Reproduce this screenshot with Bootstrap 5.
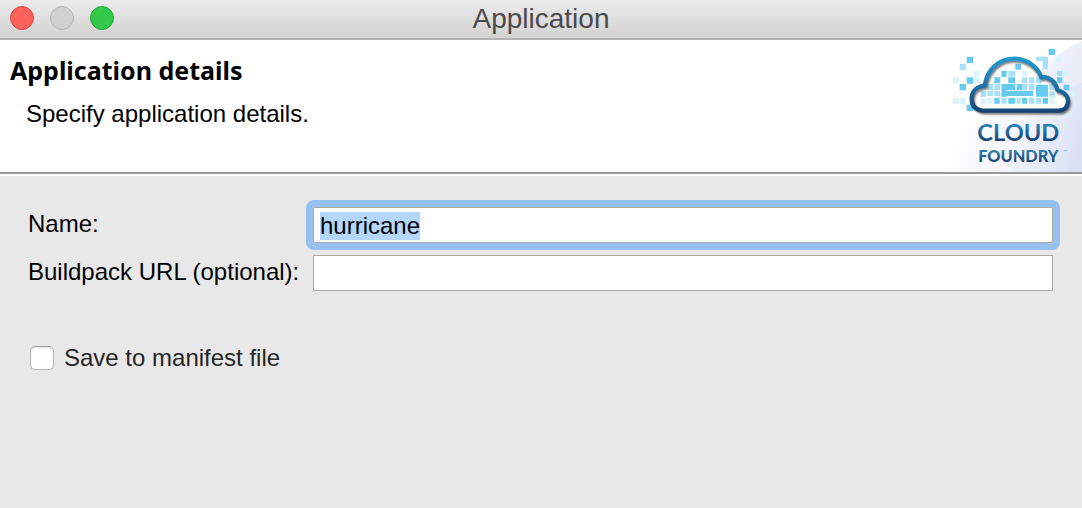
<!DOCTYPE html>
<html lang="en">
<head>
<meta charset="utf-8">
<meta name="viewport" content="width=device-width, initial-scale=1">
<title>Application</title>
<link href="https://cdn.jsdelivr.net/npm/bootstrap@5.3.0/dist/css/bootstrap.min.css" rel="stylesheet">
<style>
  body { background: #e8e8e8; color: #000; font: 24px/28px "Liberation Sans", Arial, sans-serif; }
  .titlebar { height: 40px; background: linear-gradient(#ebebeb, #d2d2d2); border-bottom: 2px solid #b1b1b1; }
  .window-title { font-size: 28px; line-height: 38px; color: #4a4a4a; }
  .lights { left: 10px; top: 6px; gap: 16px; }
  .light { width: 24px; height: 24px; border: 1px solid #b4b4b4; background: #d0d0d0; }
  .light-close { background: #fc605c; border-color: #e0443f; }
  .light-zoom { background: #34c84a; border-color: #1faa32; }
  .banner { background: #fff; border-bottom: 2px solid #999; box-shadow: 0 2px #fff; }
  .banner-text { padding: 16px 10px 0; }
  .banner h1 { font: bold 25px/28px "Noto Sans", sans-serif; margin: 0 0 16px; }
  .banner p { margin: 0 0 0 16px; }
  .details { padding: 33px 29px 0 28px; }
  .fields { display: grid; grid-template-columns: 269px 1fr; column-gap: 16px; row-gap: 12px; align-items: center; }
  .fields label { padding-bottom: 2px; }
  .fields .form-control { height: 36px; padding: 2px 6px 0; border: 1px solid #acacac; border-radius: 0; font: inherit; color: #000; background: #fff; }
  .fields .form-control:focus, .fields .ringed { border-color: #acacac; border-radius: 1px; box-shadow: none; outline: 7px solid #95c0f0; }
  .form-control::selection { background: #b3d7ff; color: #000; }
  .save-row { margin: 53px 0 0 2px; gap: 10px; color: #262626; }
  .save-row .form-check-input { width: 24px; height: 24px; margin: 0; border: 1px solid #b8b8b8; border-top-color: #a0a0a0; border-radius: 5px; background-color: #fff; box-shadow: inset 0 1px 2px #ddd; }
</style>
</head>
<body>
<header class="titlebar position-relative text-center">
  <div class="lights position-absolute d-flex">
    <button type="button" class="light light-close rounded-circle p-0" aria-label="Close"></button>
    <button type="button" class="light rounded-circle p-0" aria-label="Minimize" disabled></button>
    <button type="button" class="light light-zoom rounded-circle p-0" aria-label="Zoom"></button>
  </div>
  <div class="window-title">Application</div>
</header>

<section class="banner d-flex justify-content-between">
  <div class="banner-text">
    <h1>Application details</h1>
    <p>Specify application details.</p>
  </div>
  <svg class="flex-shrink-0" width="150" height="132" viewBox="0 12 450 396" role="img" aria-label="Cloud Foundry">
    <defs>
      <linearGradient id="sky" gradientUnits="userSpaceOnUse" x1="90" y1="200" x2="450" y2="320">
        <stop offset="0" stop-color="#fff"/><stop offset="0.5" stop-color="#f4f6fc"/><stop offset="1" stop-color="#dae1f5"/>
      </linearGradient>
      <linearGradient id="edge" gradientUnits="userSpaceOnUse" x1="0" y1="62" x2="0" y2="230">
        <stop offset="0" stop-color="#2199d0"/><stop offset="0.4" stop-color="#207fb5"/><stop offset="1" stop-color="#17406f"/>
      </linearGradient>
      <linearGradient id="ink1" gradientUnits="userSpaceOnUse" x1="0" y1="268" x2="0" y2="318">
        <stop offset="0" stop-color="#2681b4"/><stop offset="1" stop-color="#173c70"/>
      </linearGradient>
      <linearGradient id="ink2" gradientUnits="userSpaceOnUse" x1="0" y1="340" x2="0" y2="375">
        <stop offset="0" stop-color="#2c87b8"/><stop offset="1" stop-color="#234675"/>
      </linearGradient>
      <filter id="soft" x="-10%" y="-10%" width="120%" height="130%"><feGaussianBlur stdDeviation="3"/></filter>
    </defs>
    <path d="M0 408V330Q120 270 210 215C290 160 340 60 450 16V408Z" fill="url(#sky)"/>
    <path d="M365 100C385 55 410 30 450 16V140Q400 155 350 185Z" fill="#eceffa" opacity="0.7"/>
    <path d="M150 224C128 220 118 205 119 185C120 165 135 152 158 149C165 100 200 68 248 68C290 70 318 95 328 124C352 120 372 138 376 162C398 168 410 182 408 198C406 214 396 224 380 224Z" fill="#fff"/>
    <g fill="#67caee">
      <path d="M104 62h19v19h-19zM350 38h19v19h-19zM83 144h19v19H83zM104 124h19v19h-19zM104 206h19v19h-19zM250 83h17v18h-17zM208 104h16v19h-16zM187 124h18v18h-18zM229 124h20v18h-20zM208 144h42v18h-42zM208 144h16v38h-16zM254 144h16v18h-16zM208 164h96v16h-96zM312 146h36v36h-36zM187 186h16v17h-16zM229 186h20v17h-20zM270 186h16v17h-16zM332 186h16v17h-16zM375 124h16v16h-16zM395 146h17v17h-17z"/>
    </g>
    <g fill="#a8e1f5">
      <path d="M83 83h19v19H83zM312 62h36v38h-16V76h-20zM229 104h20v18h-20zM270 124h16v18h-16zM291 124h16v18h-16zM312 124h16v18h-16zM270 144h16v18h-16zM291 144h16v18h-16zM166 144h17v18h-17zM187 144h17v18h-17zM166 164h17v16h-17zM187 164h17v16h-17zM208 186h16v17h-16zM254 186h12v17h-12zM291 186h16v17h-16zM312 186h16v17h-16zM352 144h16v18h-16zM352 166h16v16h-16zM146 166h16v16h-16zM375 104h16v16h-16z"/>
    </g>
    <g fill="#daf3fc">
      <path d="M63 124h18v18H63zM63 186h18v18H63zM125 104h18v18h-18zM125 124h18v18h-18zM83 186h18v18H83zM371 62h16v16h-16zM395 104h16v16h-16zM146 186h16v17h-16zM166 186h16v17h-16zM352 186h16v17h-16zM395 230h14v14h-14zM415 166h14v14h-14zM270 104h16v16h-16z"/>
    </g>
    <path d="M155 231C133 227 123 212 124 192C125 172 140 159 163 156C170 107 205 75 250 75C290 77 318 102 330 131C354 127 372 145 378 169C400 175 415 189 413 205C411 221 400 231 384 231Z" fill="none" stroke="#333" stroke-width="8" opacity="0.8" filter="url(#soft)"/>
    <path d="M150 224C128 220 118 205 119 185C120 165 135 152 158 149C165 100 200 68 248 68C290 70 318 95 328 124C352 120 372 138 376 162C398 168 410 182 408 198C406 214 396 224 380 224Z" fill="none" stroke="url(#edge)" stroke-width="13" stroke-linejoin="round"/>
    <text x="259" y="316" text-anchor="middle" font-family="Lato, sans-serif" font-weight="700" font-size="71" fill="url(#ink1)">CLOUD</text>
    <text x="259" y="377" text-anchor="middle" font-family="Lato, sans-serif" font-weight="900" font-size="49" fill="url(#ink2)">FOUNDRY</text>
    <path d="M394 344h12" stroke="#a9cde6" stroke-width="4"/>
  </svg>
</section>

<main class="details">
  <form>
    <div class="fields">
      <label for="name">Name:</label>
      <input id="name" class="form-control ringed" type="text" value="hurricane" autocomplete="off" spellcheck="false" autofocus>
      <label for="buildpack" class="text-nowrap">Buildpack URL (optional):</label>
      <input id="buildpack" class="form-control" type="text" autocomplete="off">
    </div>
    <div class="save-row d-flex align-items-center">
      <input id="manifest" class="form-check-input" type="checkbox">
      <label for="manifest">Save to manifest file</label>
    </div>
  </form>
</main>
<script src="https://cdn.jsdelivr.net/npm/bootstrap@5.3.0/dist/js/bootstrap.bundle.min.js"></script>
<script>
  const nameField = document.getElementById('name');
  nameField.focus();
  nameField.select();
</script>
</body>
</html>
